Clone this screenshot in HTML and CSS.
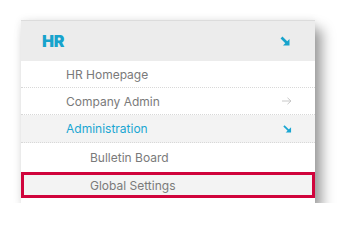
FILE: index.html
```html
<!DOCTYPE html>
<html lang="en">
<head>
    <meta charset="UTF-8">
    <meta name="viewport" content="width=device-width, initial-scale=1.0">
    <title>HR Menu</title>
    <link rel="stylesheet" href="styles.css">
</head>
<body>
    <nav class="menu">
        <div class="menu-header">
            <span class="menu-title">HR</span>
            <svg class="arrow-down" width="10" height="10" viewBox="0 0 10 10">
                <path d="M1.5 1.5 L7.5 7.5" stroke="#17a3cc" stroke-width="2.6" fill="none"/>
                <polygon points="9.5,3 9.5,9.5 3,9.5" fill="#17a3cc"/>
            </svg>
        </div>
        <ul class="menu-list">
            <li class="menu-item">HR Homepage</li>
            <li class="menu-item">
                <span>Company Admin</span>
                <svg class="arrow-right" width="10" height="8" viewBox="0 0 10 8">
                    <path d="M0 4 H9 M5.5 0.8 L9 4 L5.5 7.2" stroke="#c8c8c8" stroke-width="1" fill="none"/>
                </svg>
            </li>
            <li class="menu-item open">
                <span>Administration</span>
                <svg class="arrow-down small" width="9" height="8" viewBox="0 0 10 9">
                    <path d="M1 1 L7 7" stroke="#1aa6d2" stroke-width="2" fill="none"/>
                    <polygon points="9,2.5 9,8.5 3,8.5" fill="#1aa6d2"/>
                </svg>
            </li>
            <li class="menu-item sub">Bulletin Board</li>
            <li class="menu-item sub selected">Global Settings</li>
        </ul>
    </nav>
</body>
</html>
```

FILE: styles.css
```css
body {
    margin: 0;
    padding: 20px 0 0 21px;
    background: #fff;
    font-family: Inter, "Liberation Sans", sans-serif;
}
.menu {
    width: 294px;
    background: #fff;
    border-top: 1px solid #dcdcdc;
    padding-bottom: 5px;
    box-shadow: 7px 9px 12px rgba(0, 0, 0, 0.38), 0 0 8px rgba(0, 0, 0, 0.08);
}
.menu-header {
    display: flex;
    align-items: center;
    justify-content: space-between;
    height: 40px;
    padding: 0 25px 0 21px;
    background: #ececec;
}
.menu-title {
    color: #17a3cc;
    font-size: 16px;
    font-weight: 900;
    letter-spacing: -0.3px;
}
.menu-list {
    list-style: none;
    margin: 0;
    padding: 0;
}
.menu-item {
    display: flex;
    align-items: center;
    justify-content: space-between;
    height: 26px;
    padding: 0 23px 0 45px;
    color: #7a7a7a;
    font-size: 12px;
    border-bottom: 1px dotted #d8d8d8;
}
.menu-item.open {
    height: 27px;
    background: #f3f3f3;
    color: #1aa6d2;
}
.menu-item.sub {
    padding-left: 69px;
    border-bottom: none;
    height: 29px;
}
.menu-item.selected {
    height: 20px;
    padding-left: 66px;
    background: #f3f3f3;
    border: 3px solid #d0043c;
}
```
